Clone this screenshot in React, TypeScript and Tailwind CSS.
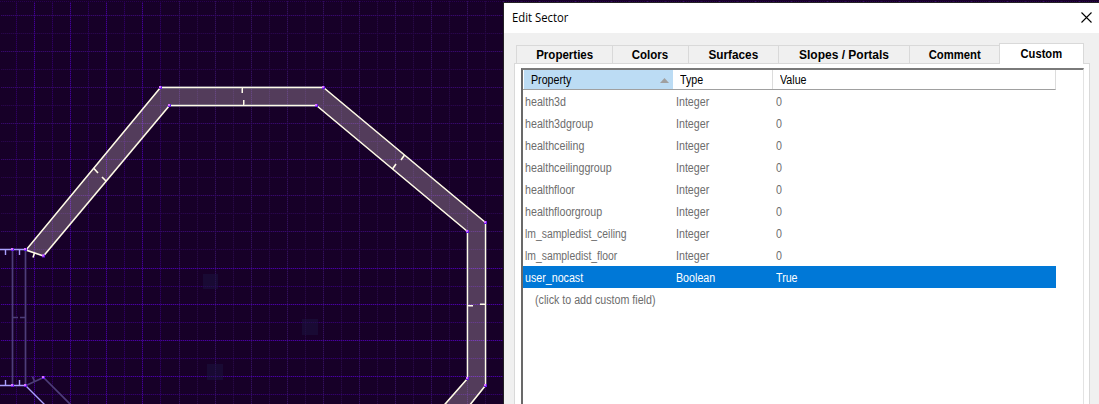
import clsx from "clsx";

const tabs = [
  { label: "Properties", box: "w-24", text: "scale-x-[0.96]" },
  { label: "Colors", box: "w-[76px]", text: "scale-x-[0.96]" },
  { label: "Surfaces", box: "w-[90px]", text: "scale-x-[0.98]" },
  { label: "Slopes / Portals", box: "w-[131px]", text: "scale-x-100" },
  { label: "Comment", box: "w-[90px]", text: "scale-x-[0.94]" },
];

const rows = [
  ["health3d", "Integer", "0"],
  ["health3dgroup", "Integer", "0"],
  ["healthceiling", "Integer", "0"],
  ["healthceilinggroup", "Integer", "0"],
  ["healthfloor", "Integer", "0"],
  ["healthfloorgroup", "Integer", "0"],
  ["lm_sampledist_ceiling", "Integer", "0"],
  ["lm_sampledist_floor", "Integer", "0"],
  ["user_nocast", "Boolean", "True"],
];

function lineX(i: number) {
  const x = 16 + i * 18;
  return x > 165 ? x + 1 : x;
}
function lineY(i: number) {
  const y = 15 + i * 18;
  return y > 260 ? y + 1 : y;
}

const vertices = [
  [160.5, 87.5], [169.5, 105.5], [323.5, 87.5], [316.5, 105.5], [485.5, 222.5], [467.5, 231.5],
  [467.5, 378.5], [485.5, 385.5], [12.5, 249.5], [25.5, 249.5], [43.5, 256], [12.5, 385.5],
  [25.5, 385.5], [43.5, 377.5],
];

function GridLine({ d, color }: { d: string; color: string }) {
  return (
    <g stroke={color}>
      <path d={d} strokeOpacity="0.35" />
      <path d={d} strokeDasharray="1 1" />
    </g>
  );
}

function Grid() {
  return (
    <g shapeRendering="crispEdges">
      {Array.from({ length: 60 }, (_, i) => {
        const major = i % 2 === 1;
        const x = lineX(i);
        const odd = x > 165 ? i % 2 === 1 : major;
        const color = x < 165 ? (odd ? "#430097" : "#2e0062") : odd ? "#33105e" : "#270a46";
        return <GridLine key={i} d={`M${x + 0.5} 1V404`} color={color} />;
      })}
      {Array.from({ length: 22 }, (_, i) => {
        const major = i % 2 === 0;
        const y = lineY(i);
        const color = y > 260 ? (major ? "#4700a0" : "#310068") : major ? "#36086a" : "#28054b";
        return <GridLine key={i} d={`M1 ${y + 0.5}H1099`} color={color} />;
      })}
      <path d="M0 1.5H1099" stroke="#28004f" strokeDasharray="1 1" />
    </g>
  );
}

function SectorMap() {
  return (
    <svg className="absolute inset-0" width="1099" height="404" viewBox="0 0 1099 404" fill="none">
      <rect width="1099" height="404" fill="#170028" />
      <Grid />
      <g fill="#1b1440" fillOpacity="0.5">
        <rect x="203" y="274" width="15" height="15" />
        <rect x="302" y="319" width="16" height="16" />
        <rect x="207" y="364" width="16" height="16" />
      </g>
      <path
        d="M26 250L160.5 87.5H323.5L485.5 222.5V385.5L465 411H439L467.5 378.5V231.5L316.5 105.5H169.5L43.5 256Z"
        fill="#ffe8f0"
        fillOpacity="0.26"
      />
      <g stroke="#82798d" strokeWidth="3" strokeOpacity="0.8">
        <path d="M160 87.5H323M169 105.5H316" />
        <path d="M467.5 232V378M485.5 223V385" strokeOpacity="0.6" />
      </g>
      <g stroke="#fffbe7" strokeWidth="1.6">
        <path d="M43.5 256L26 250L160.5 87.5" />
        <path d="M43.5 256L169.5 105.5" />
        <path d="M323.5 87.5L485.5 222.5M316.5 105.5L467.5 231.5" />
        <path d="M485.5 385.5L465 411M467.5 378.5L439 411" />
        <path d="M93.5 168L98 173M102 177L106.500 181.500M404.500 155L401 160M396 164L392.500 169M34.500 253L33 257.500" />
      </g>
      <g stroke="#fffbe7" shapeRendering="crispEdges">
        <path d="M160 87.500H324M169 105.500H317M467.500 231V379M485.500 222V386" />
        <path d="M242.500 88V93M243.500 100V105M468 305.500H473M480 304.500H485" />
      </g>
      <path d="M241.500 88V93M244.500 100V105M468 306.500H473M480 303.500H485" stroke="#a79ca9" />
      <g stroke="#4d3d79" strokeWidth="1.700">
        <path d="M12.500 250V385M25.500 250V385M13 317.500H18M20 317.500H25" />
        <path d="M26 385.500L43.500 377.500L71 405M34.500 381.500L32.500 376.500" />
      </g>
      <g stroke="#aba0ff" strokeWidth="1.400">
        <path d="M0 249.500H25M0 385.500H25M5.500 250V255M19.500 250V255M5.500 385V380M19.500 385V380M25.500 385.500L45 405" />
      </g>
      {vertices.map(([x, y]) => (
        <g key={`${x}-${y}`}>
          <rect x={x - 1.5} y={y - 1.5} width="3" height="3" fill="#6517e6" />
          <rect x={x - 1.5} y={y - 1.5} width="2" height="2" fill="#d970ff" />
        </g>
      ))}
    </svg>
  );
}

function Cell({ children }: { children: string }) {
  return (
    <span
      className={clsx(
        "inline-block origin-left whitespace-pre",
        children.startsWith("lm_") ? "scale-x-[0.865]" : "scale-x-[0.89]",
      )}
    >
      {children}
    </span>
  );
}

function PropertyList() {
  return (
    <div className="h-[400px] w-[563px] border-l-2 border-t-2 border-r border-l-[#696969] border-t-[#7a7a7a] border-r-[#e3e3e3] bg-white text-[12px] leading-6 text-[#6d6d6d]">
      <div className="flex h-5 w-[533px] border-r border-b border-r-[#dcdcdc] border-b-[#a0a0a0] leading-5 text-black">
        <div className="ml-px flex w-[149px] items-center justify-between bg-[#bcdcf4] pr-1 pl-[7px]">
          <Cell>Property</Cell>
          <svg width="9" height="5" viewBox="0 0 9 5" className="mt-px">
            <path d="M4.500 0L9 5H0Z" fill="#a0a0a0" />
          </svg>
        </div>
        <div className="w-[100px] border-r border-[#dcdcdc] pl-[7px]"><Cell>Type</Cell></div>
        <div className="pl-[7px]"><Cell>Value</Cell></div>
      </div>
      {rows.map(([name, type, value]) => (
        <div
          key={name}
          className={clsx("flex h-[22px] w-[533px] pl-0.5", name === "user_nocast" && "bg-[#0078d7] text-white")}
        >
          <div className="w-[151px]"><Cell>{name}</Cell></div>
          <div className="w-[100px]"><Cell>{type}</Cell></div>
          <div><Cell>{value}</Cell></div>
        </div>
      ))}
      <div className="pl-3"><Cell>(click to add custom field)</Cell></div>
    </div>
  );
}

function SectorDialog() {
  return (
    <section className="relative mt-[3px] ml-[504px] h-[401px] bg-[#f0f0f0] shadow-[0_0_0_1px_#242024]">
      <header className="flex h-[30px] items-center justify-between bg-white pr-[7px] pl-2">
        <h1 className="origin-left scale-x-[0.94] font-['Open_Sans',sans-serif] text-[12px] text-black">Edit Sector</h1>
        <svg width="11" height="11" viewBox="0 0 11 11" className="-mt-0.5">
          <path d="M0.500 0.500L10.500 10.500M10.500 0.500L0.500 10.500" stroke="#000" strokeWidth="1.100" />
        </svg>
      </header>
      <nav className="flex h-[30px] items-end pl-3 text-[12px] font-bold text-black">
        {tabs.map((tab) => (
          <div
            key={tab.label}
            className={clsx("flex h-[18px] items-center justify-center border-t border-l border-[#d9d9d9] pt-px", tab.box)}
          >
            <span className={clsx("whitespace-pre", tab.text)}>{tab.label}</span>
          </div>
        ))}
        <div className="relative z-10 -mb-px flex h-[21px] w-[85px] items-center justify-center border border-b-0 border-[#d9d9d9] bg-white pb-px">
          <span className="scale-x-[0.93]">Custom</span>
        </div>
      </nav>
      <div className="ml-2.5 h-[341px] w-[576px] overflow-hidden border-x border-t border-[#d9d9d9] bg-white pt-1 pl-1.5">
        <PropertyList />
      </div>
    </section>
  );
}

export default function App() {
  return (
    <main className="relative h-[404px] w-[1099px] overflow-hidden font-['Liberation_Sans',sans-serif]">
      <SectorMap />
      <div className="flow-root">
        <SectorDialog />
      </div>
    </main>
  );
}
